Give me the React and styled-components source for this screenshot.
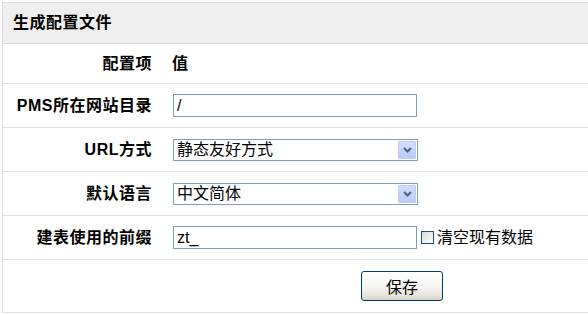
import React from "react";
import styled, { createGlobalStyle } from "styled-components";

const Global = createGlobalStyle`
  html, body { margin: 0; padding: 0; background: #fff; overflow: hidden; }
  body { font-family: "Liberation Sans", "Noto Sans CJK SC", sans-serif; font-size: 16px; color: #000; }
`;

const Page = styled.div`
  padding: 2px 0 0 2px;
`;

const Panel = styled.div`
  border-top: 1px solid #dcdcdc;
  border-left: 1px solid #dcdcdc;
`;

const Header = styled.div`
  height: 41px;
  background: #eeeeee;
  border-bottom: 1px solid #dcdcdc;
  display: flex;
  align-items: center;
  padding-left: 10px;
  font-weight: bold;
  font-size: 16px;
  letter-spacing: 0.5px;
  line-height: 18px;
  box-sizing: border-box;
`;

const Row = styled.div`
  display: grid;
  grid-template-columns: 159px 1fr;
  align-items: center;
  min-height: ${(p) => p.$h}px;
  border-bottom: 1px solid #e2e2e2;
  box-sizing: border-box;
`;

const Label = styled.div`
  text-align: right;
  padding-right: 10px;
  font-weight: bold;
  letter-spacing: 0.5px;
  line-height: 19px;
  white-space: nowrap;
`;

const Value = styled.div`
  padding-left: ${(p) => (p.$head ? 10 : 11)}px;
  display: flex;
  align-items: center;
  font-weight: ${(p) => (p.$head ? "bold" : "normal")};
  line-height: 19px;
`;

const TextInput = styled.input`
  width: 244px;
  height: 23px;
  box-sizing: border-box;
  border: 1px solid #7f9db9;
  padding: 0 3px;
  margin: 0;
  font: 16px "Liberation Sans", "Noto Sans CJK SC", sans-serif;
  color: #000;
  outline: none;
`;

const SelectBox = styled.div`
  width: 245px;
  height: 22px;
  box-sizing: border-box;
  border: 1px solid #7f9db9;
  display: flex;
  align-items: stretch;
  background: #fff;
`;

const SelectText = styled.div`
  flex: 1;
  padding-left: 3px;
  display: flex;
  align-items: center;
  font-size: 16px;
  line-height: 18px;
`;

const Arrow = styled.div`
  width: 16px;
  margin: 1px;
  border: 1px solid #bccdf5;
  border-radius: 1px;
  background: linear-gradient(#d3e0fd, #b6cbf8);
  display: flex;
  align-items: center;
  justify-content: center;
`;

const Check = styled.span`
  width: 13px;
  height: 13px;
  box-sizing: border-box;
  border: 1px solid #1c5180;
  background: linear-gradient(135deg, #dcdcd7, #ffffff);
  margin-left: 4px;
  margin-right: 3px;
  flex: none;
`;

const CheckLabel = styled.span`
  font-size: 16px;
  white-space: nowrap;
`;

const Button = styled.button`
  margin-left: 188px;
  width: 82px;
  height: 30px;
  border: 1px solid #003c74;
  border-radius: 3px;
  background: linear-gradient(#ffffff, #f4f4f0 55%, #e6e3da 85%, #d6d0c5);
  font: 16px "Liberation Sans", "Noto Sans CJK SC", sans-serif;
  color: #000;
  padding: 0;
`;

const ArrowIcon = () => (
  <svg width="9" height="6" viewBox="0 0 9 6">
    <path d="M1 1 L4.5 4.5 L8 1" fill="none" stroke="#4d6185" strokeWidth="2" />
  </svg>
);

const Select = ({ text }) => (
  <SelectBox>
    <SelectText>{text}</SelectText>
    <Arrow>
      <ArrowIcon />
    </Arrow>
  </SelectBox>
);

export default function App() {
  return (
    <>
      <Global />
      <Page>
        <Panel>
          <Header>生成配置文件</Header>
          <Row $h={40}>
            <Label>配置项</Label>
            <Value $head>值</Value>
          </Row>
          <Row $h={44}>
            <Label>PMS所在网站目录</Label>
            <Value>
              <TextInput defaultValue="/" />
            </Value>
          </Row>
          <Row $h={44}>
            <Label>URL方式</Label>
            <Value>
              <Select text="静态友好方式" />
            </Value>
          </Row>
          <Row $h={44}>
            <Label>默认语言</Label>
            <Value>
              <Select text="中文简体" />
            </Value>
          </Row>
          <Row $h={44}>
            <Label>建表使用的前缀</Label>
            <Value>
              <TextInput defaultValue="zt_" />
              <Check />
              <CheckLabel>清空现有数据</CheckLabel>
            </Value>
          </Row>
          <Row $h={53}>
            <Label />
            <Value>
              <Button>保存</Button>
            </Value>
          </Row>
        </Panel>
      </Page>
    </>
  );
}
